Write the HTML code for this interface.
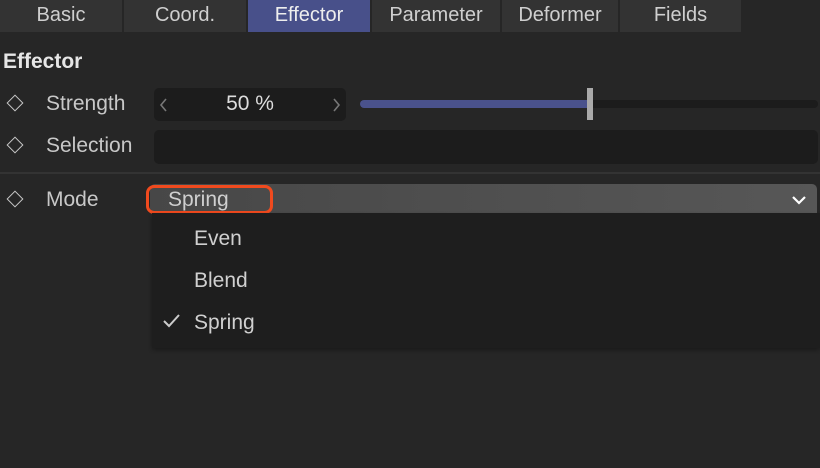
<!DOCTYPE html>
<html><head><meta charset="utf-8"><style>
*{margin:0;padding:0;box-sizing:border-box}
body{width:820px;height:468px;background:#262626;font-family:"Liberation Sans",sans-serif;color:#d0d0d0;position:relative;overflow:hidden}
.a{position:absolute}
.tab{position:absolute;top:0;height:32px;background:#333;color:#cfcfcf;font-size:20px;text-align:center;line-height:31px}
.lbl{position:absolute;font-size:21px;color:#c8c8c8}
.dia{position:absolute;left:9px;width:12px;height:12px;border:1.6px solid #c8c8c8;transform:rotate(45deg)}
.mi{position:absolute;left:194px;font-size:21px;color:#d0d0d0}
</style></head><body>
<div class="tab" style="left:0;width:122px">Basic</div>
<div class="tab" style="left:124px;width:122px">Coord.</div>
<div class="tab" style="left:248px;width:122px;background:#48508a;color:#eee">Effector</div>
<div class="tab" style="left:372px;width:128px">Parameter</div>
<div class="tab" style="left:502px;width:116px">Deformer</div>
<div class="tab" style="left:620px;width:121px">Fields</div>

<div class="a" style="left:3px;top:50px;font-size:21px;font-weight:bold;color:#e6e6e6">Effector</div>

<div class="dia" style="top:97px"></div>
<div class="lbl" style="left:46px;top:92px">Strength</div>
<div class="a" style="left:154px;top:88px;width:192px;height:33px;background:#1c1c1c;border-radius:5px"></div>
<svg class="a" style="left:156px;top:95px" width="190" height="20"><path d="M10 4 L5 10 L10 16" stroke="#777" stroke-width="1.6" fill="none"/><path d="M178 4 L183 10 L178 16" stroke="#777" stroke-width="1.6" fill="none"/></svg>
<div class="a" style="left:154px;top:92px;width:192px;text-align:center;font-size:21px;color:#ddd">50 %</div>
<div class="a" style="left:360px;top:100px;width:458px;height:8px;background:#1c1c1c;border-radius:4px"></div>
<div class="a" style="left:360px;top:100px;width:230px;height:8px;background:#4a528c;border-radius:4px 0 0 4px"></div>
<div class="a" style="left:587px;top:88px;width:6px;height:32px;background:#aaa"></div>

<div class="dia" style="top:139px"></div>
<div class="lbl" style="left:46px;top:134px">Selection</div>
<div class="a" style="left:154px;top:130px;width:664px;height:34px;background:#1c1c1c;border-radius:5px"></div>

<div class="a" style="left:0;top:172px;width:820px;height:2px;background:#333"></div>

<div class="dia" style="top:193px"></div>
<div class="lbl" style="left:46px;top:188px">Mode</div>
<div class="a" style="left:150px;top:184px;width:667px;height:29px;background:linear-gradient(90deg,#474747,#575757);border-radius:5px 5px 0 0"></div>
<div class="a" style="left:168px;top:188px;font-size:21px;color:#cfcfcf">Spring</div>
<div class="a" style="left:146px;top:185px;width:127px;height:29px;border:3px solid #f04a1e;border-radius:8px"></div>
<svg class="a" style="left:790px;top:193px" width="18" height="14"><path d="M3 4 L9 10 L15 4" stroke="#fff" stroke-width="2.2" fill="none"/></svg>

<div class="a" style="left:152px;top:213px;width:668px;height:135px;background:#1e1e1e;box-shadow:0 2px 4px rgba(0,0,0,.3)"></div>
<div class="mi" style="top:227px">Even</div>
<div class="mi" style="top:269px">Blend</div>
<div class="mi" style="top:311px">Spring</div>
<svg class="a" style="left:162px;top:313px" width="20" height="16"><path d="M2 8 L7 13 L17 2" stroke="#ccc" stroke-width="2" fill="none"/></svg>
</body></html>
